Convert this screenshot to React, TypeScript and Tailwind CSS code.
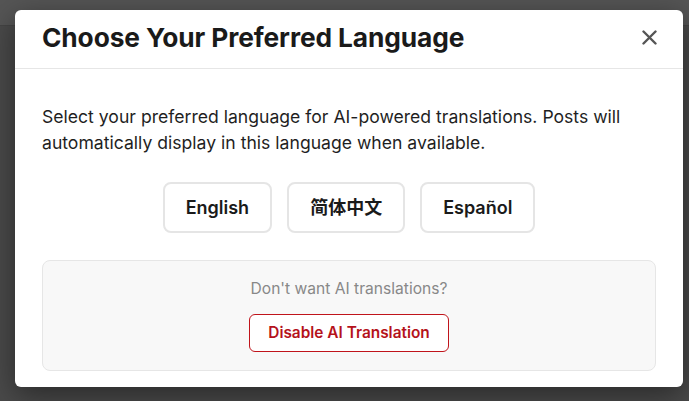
import React from "react";

export default function App() {
  return (
    <div
      className="relative w-[689px] h-[401px] overflow-hidden bg-[#4a4a4a]"
      style={{ fontFamily: "Inter, 'Noto Sans CJK SC', sans-serif" }}
    >
      <div className="h-[26px] bg-[#555555] border-b border-[#444444]" />
      <div className="absolute inset-0 pt-[10px] pl-[15px]">
        <div className="w-[668px] h-[377px] bg-white rounded-[6px] shadow-[0_8px_30px_rgba(0,0,0,0.45)] flex flex-col">
          <div className="h-[59px] flex items-center justify-between pl-[27px] pr-[26px] pb-[3px] border-b border-[#e6e6e6]">
            <h2 className="text-[26.3px] leading-[32px] font-bold text-[#1a1a1a] tracking-[-0.1px]">
              Choose Your Preferred Language
            </h2>
            <button className="w-[16px] h-[16px] flex items-center justify-center">
              <svg width="15" height="15" viewBox="0 0 15 15">
                <path d="M1.5 1.5 L13.5 13.5 M13.5 1.5 L1.5 13.5" stroke="#555" strokeWidth="2.4" strokeLinecap="round" />
              </svg>
            </button>
          </div>
          <div className="flex flex-col px-[27px] pt-[35px]">
            <p className="text-[17.6px] leading-[26px] text-[#1f1f1f]">
              Select your preferred language for AI-powered translations. Posts will automatically display in this language when available.
            </p>
            <div className="flex justify-center gap-[15px] mt-[26px]">
              {["English", "简体中文", "Español"].map((l) => (
                <button
                  key={l}
                  className="h-[51px] px-[21px] rounded-[8px] border-2 border-[#e5e5e5] bg-white text-[18px] font-semibold text-[#1a1a1a]"
                >
                  {l}
                </button>
              ))}
            </div>
            <div className="mt-[27px] h-[111px] rounded-[8px] border border-[#e6e6e6] bg-[#f8f8f8] flex flex-col items-center pt-[16px]">
              <div className="text-[15.6px] leading-[24px] text-[#888888]">Don't want AI translations?</div>
              <button className="mt-[13px] h-[38px] px-[18px] rounded-[6px] border border-[#c0141b] bg-white text-[15.4px] font-semibold text-[#b5121b]">
                Disable AI Translation
              </button>
            </div>
          </div>
        </div>
      </div>
    </div>
  );
}
